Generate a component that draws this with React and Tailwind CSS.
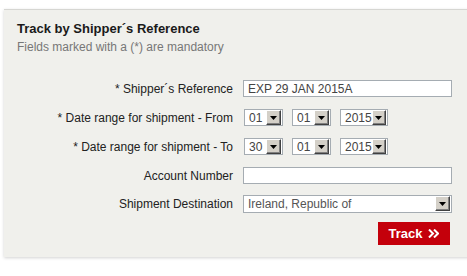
import React from 'react'

const Arrow = () => (
  <span className="flex h-[15px] w-[15px] items-center justify-center border border-t-white border-l-white border-r-[#404040] border-b-[#404040] bg-[#d4d0c8] shadow-[inset_-1px_-1px_0_#808080]">
    <svg width="7" height="4" viewBox="0 0 7 4"><path d="M0 0h7L3.5 4z" fill="#000" /></svg>
  </span>
)

const Select = ({ value, w }) => (
  <div className={`flex h-[17px] ${w} items-center justify-between border border-[#a5acb2] bg-white pl-[4px] pr-px text-[12px] text-[#444]`}>
    <span>{value}</span>
    <Arrow />
  </div>
)

const Row = ({ label, children, h = 'h-[29px]' }) => (
  <>
    <div className={`flex ${h} items-center justify-end text-[12px] text-[#222]`}>{label}</div>
    <div className={`flex ${h} items-center`}>{children}</div>
  </>
)

const App = () => {
  return (
    <div className="h-[276px] w-[467px] overflow-hidden bg-white pt-[9px] pl-[4px]" style={{ fontFamily: '"Liberation Sans", Arial, sans-serif' }}>
      <div className="w-[470px] border-t border-[#d6d6d2] bg-[#f0f0ec] pt-[11px] pb-[12px] pl-[13px] shadow-[0_1px_3px_rgba(0,0,0,0.18)]">
        <h2 className="text-[13px] font-bold leading-[16px] text-[#1a1a1a]">Track by Shipper´s Reference</h2>
        <p className="mt-[3px] text-[12px] leading-[14px] text-[#777]">Fields marked with a (*) are mandatory</p>
        <div className="mt-[20px] grid grid-cols-[216px_auto] gap-x-[10px]">
          <Row label="* Shipper´s Reference">
            <div className="flex h-[17px] w-[209px] items-center border border-[#a5acb2] bg-white pl-[4px] text-[12px] text-[#444]">EXP 29 JAN 2015A</div>
          </Row>
          <Row label="* Date range for shipment - From">
            <div className="flex items-center gap-[9px] pl-px">
              <Select value="01" w="w-[39px]" />
              <Select value="01" w="w-[39px]" />
              <Select value="2015" w="w-[48px]" />
            </div>
          </Row>
          <Row label="* Date range for shipment - To">
            <div className="flex items-center gap-[9px] pl-px">
              <Select value="30" w="w-[39px]" />
              <Select value="01" w="w-[39px]" />
              <Select value="2015" w="w-[48px]" />
            </div>
          </Row>
          <Row label="Account Number">
            <div className="h-[17px] w-[209px] border border-[#a5acb2] bg-white" />
          </Row>
          <Row label="Shipment Destination" h="h-[27px]">
            <div className="flex h-[18px] w-[209px] items-center justify-between border border-[#a5acb2] bg-white pl-[4px] pr-px text-[12px] text-[#555]">
              <span>Ireland, Republic of</span>
              <Arrow />
            </div>
          </Row>
        </div>
        <div className="mt-[5px] flex w-[433px] justify-end">
          <button className="flex h-[23px] w-[72px] items-center justify-center gap-[6px] bg-[#c4000b] text-[13px] font-bold text-white">
            Track
            <svg width="11" height="9" viewBox="0 0 11 9"><path d="M1 0.5l4 4-4 4M6 0.5l4 4-4 4" fill="none" stroke="#fff" strokeWidth="2" /></svg>
          </button>
        </div>
      </div>
    </div>
  )
}

export default App
